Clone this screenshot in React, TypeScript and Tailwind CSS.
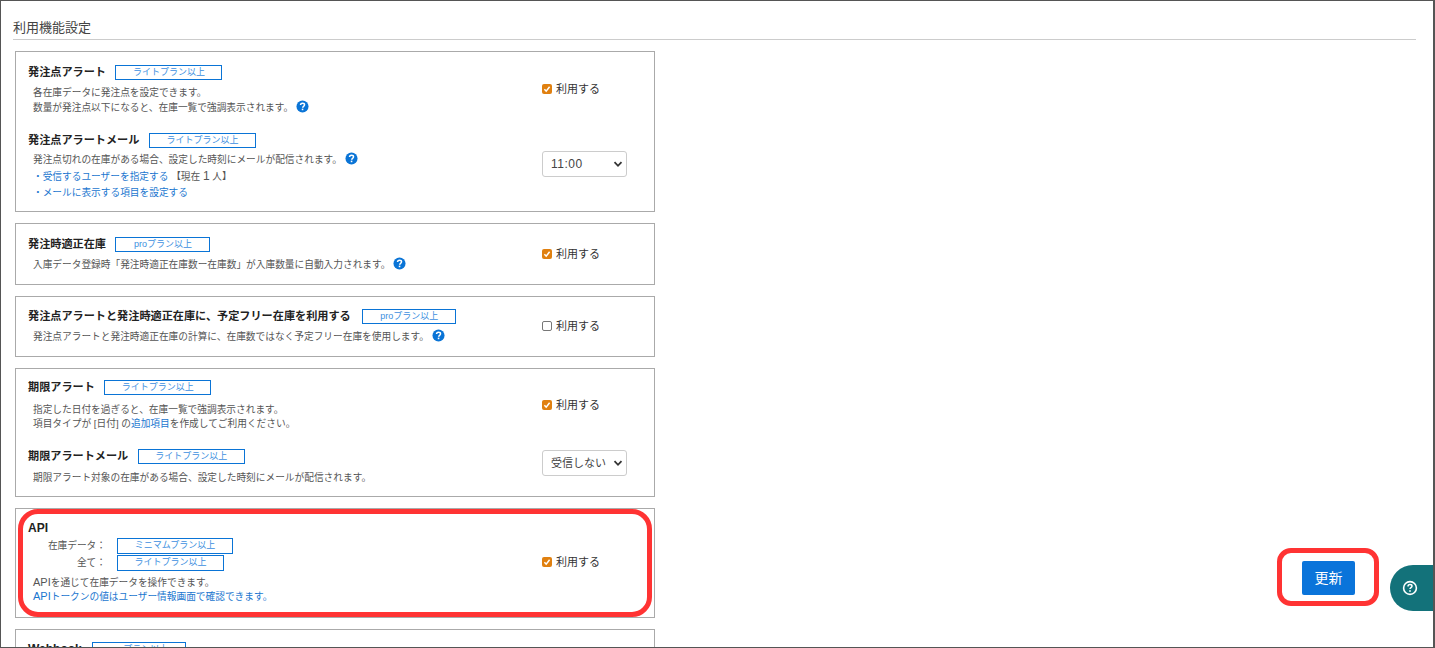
import React from 'react';

const FONT = "font-['Liberation_Sans','Noto_Sans_CJK_JP',sans-serif]";

const HelpIcon = () => (
  <svg viewBox="0 0 14 14" className="inline-block w-[13px] h-[13px] align-[-2px]">
    <circle cx="7" cy="7" r="6.5" fill="#0a74d6" />
    <path d="M4.9 5.4c0-1.3 1-2 2.2-2s2.1.7 2.1 1.8c0 1.6-2 1.6-2 3.1" fill="none" stroke="#fff" strokeWidth="1.6" />
    <rect x="6.2" y="9.3" width="1.7" height="1.7" fill="#fff" />
  </svg>
);

const Badge = ({ label, w }: { label: string; w: string }) => (
  <span className={`inline-block h-[15px] leading-[12px] border border-[#0a74d6] text-[#3d8fe0] text-[9px] text-center ${w}`}>
    {label}
  </span>
);

const Title = ({ children, latin }: { children: React.ReactNode; latin?: boolean }) => (
  <span className={`font-bold text-[#222] leading-[15px] ${latin ? 'text-[12px]' : 'text-[11.15px]'}`}>{children}</span>
);

const Desc = ({ children, className = '' }: { children: React.ReactNode; className?: string }) => (
  <p className={`text-[9.7px] text-[#555] pl-[5px] ${className}`}>{children}</p>
);

const Use = ({ checked = true }: { checked?: boolean }) => (
  <label className="flex items-center gap-[4px] text-[11px] text-[#333]">
    {checked ? (
      <span className="flex items-center justify-center w-[10px] h-[10px] rounded-[2px] bg-[#e08010]">
        <svg viewBox="0 0 10 10" className="w-[10px] h-[10px]">
          <path d="M2.4 5.2 4.2 7.2 7.6 2.8" fill="none" stroke="#fff" strokeWidth="1.5" />
        </svg>
      </span>
    ) : (
      <span className="w-[10px] h-[10px] rounded-[2px] border border-[#777] bg-white" />
    )}
    利用する
  </label>
);

const Pick = ({ value, text }: { value: string; text: string }) => (
  <div className={`flex items-center justify-between w-[85px] h-[26px] pl-2 pr-[3px] border border-[#ccc] rounded-[3px] text-[#444] ${text}`}>
    <span>{value}</span>
    <svg viewBox="0 0 10 10" className="w-[10px] h-[10px]">
      <path d="M1.5 3.2 5 6.8 8.5 3.2" fill="none" stroke="#333" strokeWidth="1.8" />
    </svg>
  </div>
);

const Link = ({ children }: { children: React.ReactNode }) => <span className="text-[#1a76cf]">{children}</span>;

const Card = ({ h, children, className = '' }: { h: string; children: React.ReactNode; className?: string }) => (
  <section className={`w-[640px] border border-[#aaa] pl-3 ${h} ${className}`}>{children}</section>
);

export default function App() {
  return (
    <div className={`relative w-[1435px] h-[648px] overflow-hidden bg-white border-t border-l border-b border-r-2 border-[#555] ${FONT}`}>
      <div className="pt-[17px] pl-3 pr-[17px]">
        <h2 className="text-[13px] leading-[19px] pb-[2px] text-[#444] border-b border-[#ccc]">利用機能設定</h2>
      </div>

      <div className="flex flex-col gap-[11px] pt-[11px] pl-[14px]">
        <Card h="h-[161px]" className="flex flex-col">
          <div className="flex pt-[13px]">
            <div className="w-[514px]">
              <div className="flex items-center gap-[9.5px]">
                <Title>発注点アラート</Title>
                <Badge label="ライトプラン以上" w="w-[107px]" />
              </div>
              <Desc className="mt-[6px] leading-[14px]">
                各在庫データに発注点を設定できます。
                <br />
                数量が発注点以下になると、在庫一覧で強調表示されます。 <HelpIcon />
              </Desc>
            </div>
            <div className="pt-[16px]">
              <Use />
            </div>
          </div>
          <div className="flex pt-[18px]">
            <div className="w-[514px]">
              <div className="flex items-center gap-[9.5px]">
                <Title>発注点アラートメール</Title>
                <Badge label="ライトプラン以上" w="w-[107px]" />
              </div>
              <Desc className="mt-[4px] leading-[16px]">
                発注点切れの在庫がある場合、設定した時刻にメールが配信されます。 <HelpIcon />
                <br />
                <Link>・受信するユーザーを指定する</Link> 【現在 <span className="text-[12px]">1</span> 人】
                <br />
                <Link>・メールに表示する項目を設定する</Link>
              </Desc>
            </div>
            <div className="pt-[18px]">
              <Pick value="11:00" text="text-[12px] tracking-[0.5px]" />
            </div>
          </div>
        </Card>

        <Card h="h-[62px]" className="flex pt-[13px]">
          <div className="w-[514px]">
            <div className="flex items-center gap-[9.5px]">
              <Title>発注時適正在庫</Title>
              <Badge label="proプラン以上" w="w-[95px]" />
            </div>
            <Desc className="mt-[5px] leading-[14px]">
              入庫データ登録時「発注時適正在庫数ー在庫数」が入庫数量に自動入力されます。 <HelpIcon />
            </Desc>
          </div>
          <div className="pt-[9px]">
            <Use />
          </div>
        </Card>

        <Card h="h-[61px]" className="flex pt-[12px]">
          <div className="w-[514px]">
            <div className="flex items-center gap-[11.5px]">
              <Title>発注点アラートと発注時適正在庫に、予定フリー在庫を利用する</Title>
              <Badge label="proプラン以上" w="w-[94px]" />
            </div>
            <Desc className="mt-[5px] leading-[14px]">
              発注点アラートと発注時適正在庫の計算に、在庫数ではなく予定フリー在庫を使用します。 <HelpIcon />
            </Desc>
          </div>
          <div className="pt-[9px]">
            <Use checked={false} />
          </div>
        </Card>

        <Card h="h-[129px]" className="flex flex-col">
          <div className="flex pt-[11px]">
            <div className="w-[514px]">
              <div className="flex items-center gap-[9.5px]">
                <Title>期限アラート</Title>
                <Badge label="ライトプラン以上" w="w-[107px]" />
              </div>
              <Desc className="mt-[8px] leading-[14px]">
                指定した日付を過ぎると、在庫一覧で強調表示されます。
                <br />
                項目タイプが [日付] の<Link>追加項目</Link>を作成してご利用ください。
              </Desc>
            </div>
            <div className="pt-[17px]">
              <Use />
            </div>
          </div>
          <div className="flex pt-[18px]">
            <div className="w-[514px]">
              <div className="flex items-center gap-[9.5px]">
                <Title>期限アラートメール</Title>
                <Badge label="ライトプラン以上" w="w-[107px]" />
              </div>
              <Desc className="mt-[7px] leading-[14px]">期限アラート対象の在庫がある場合、設定した時刻にメールが配信されます。</Desc>
            </div>
            <div className="pt-[1px]">
              <Pick value="受信しない" text="text-[11px]" />
            </div>
          </div>
        </Card>

        <Card h="h-[110px]" className="flex">
          <div className="w-[514px] pt-[6px]">
            <Title latin>API</Title>
            <div className="grid grid-cols-[78px_auto] gap-x-[11px] gap-y-[1px] -mt-[1px] text-[9.7px] text-[#555] justify-start">
              <span className="text-right leading-[16px]">在庫データ：</span>
              <Badge label="ミニマムプラン以上" w="w-[116px] h-[16px]" />
              <span className="text-right leading-[16px]">全て：</span>
              <Badge label="ライトプラン以上" w="w-[107px] h-[16px]" />
            </div>
            <Desc className="mt-[5px] leading-[14px]">
              <span className="text-[11px] leading-none">API</span>を通じて在庫データを操作できます。
              <br />
              <Link>
                <span className="text-[11px] leading-none">API</span>トークンの値はユーザー情報画面で確認できます。
              </Link>
            </Desc>
          </div>
          <div className="pt-[45px]">
            <Use />
          </div>
        </Card>

        <Card h="h-[40px]" className="pt-[12px]">
          <div className="flex items-center gap-[10.5px]">
            <Title latin>Webhook</Title>
            <Badge label="proプラン以上" w="w-[94px]" />
          </div>
        </Card>
      </div>

      {/* red annotation marks */}
      <div className="absolute left-[17px] top-[508px] w-[634px] h-[108px] border-[5px] border-[#f33] rounded-[20px]" />
      <div className="absolute left-[1276px] top-[547px] w-[102px] h-[58px] border-[5px] border-[#f33] rounded-[14px]" />

      <button className="absolute left-[1301px] top-[560px] w-[53px] h-[34px] rounded-[2px] bg-[#0a74da] text-white text-[14px]">
        更新
      </button>

      {/* floating help tab */}
      <div className="absolute left-[1389px] top-[564px] w-[43px] h-[46px] rounded-l-[23px] bg-[#13727a] flex items-center pl-[12px]">
        <svg viewBox="0 0 16 16" className="w-[16px] h-[16px]">
          <circle cx="8" cy="8" r="6.4" fill="none" stroke="#fff" strokeWidth="1.6" />
          <path d="M6 6.4c0-1.2.9-1.8 2-1.8s2 .6 2 1.6c0 1.4-2 1.4-2 2.7" fill="none" stroke="#fff" strokeWidth="1.5" />
          <rect x="7.2" y="10.2" width="1.6" height="1.6" fill="#fff" />
        </svg>
      </div>
    </div>
  );
}
